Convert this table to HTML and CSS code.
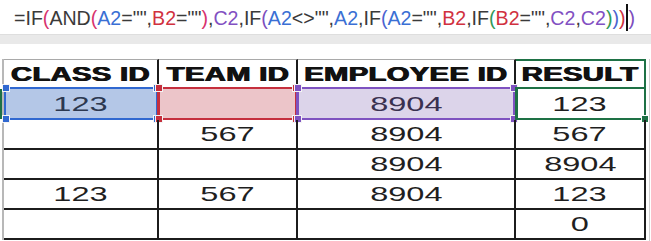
FILE: index.html
```html
<!DOCTYPE html>
<html>
<head>
<meta charset="utf-8">
<link rel="stylesheet" href="styles.css">
</head>
<body>
<div class="fbar">
  <span class="formula">=IF<span class="pk">(</span>AND<span class="pk">(</span><span class="ra">A2</span>="",<span class="rb">B2</span>=""<span class="pk">)</span>,<span class="rc">C2</span>,IF<span class="pp">(</span><span class="ra">A2</span>&lt;&gt;"",<span class="ra">A2</span>,IF<span class="pb">(</span><span class="ra">A2</span>="",<span class="rb">B2</span>,IF<span class="pg">(</span><span class="rb">B2</span>="",<span class="rc">C2</span>,<span class="rc">C2</span><span class="pg">)</span><span class="pb">)</span><span class="pr">)</span><span class="cursor"></span><span class="pp">)</span></span>
</div>
<div class="strip"></div>
<div class="gap"></div>
<div class="sheet">
  <div class="rowmark"></div>
  <div class="grid">
    <div class="cell head"><span class="hs">CLASS ID</span></div>
    <div class="cell head"><span class="hs">TEAM ID</span></div>
    <div class="cell head"><span class="hs">EMPLOYEE ID</span></div>
    <div class="cell head head-active"><span class="hs">RESULT</span></div>

    <div class="cell sel sel-a"><span class="num">123</span><div class="ref ref-a"><i class="h tl"></i><i class="h tr"></i><i class="h bl"></i><i class="h br"></i></div></div>
    <div class="cell sel sel-b"><div class="ref ref-b"><i class="h tl"></i><i class="h tr"></i><i class="h bl"></i><i class="h br"></i></div></div>
    <div class="cell sel sel-c"><span class="num">8904</span><div class="ref ref-c"><i class="h tl"></i><i class="h tr"></i><i class="h bl"></i><i class="h br"></i></div></div>
    <div class="cell sel"><span class="num">123</span><div class="active"><i class="fill"></i></div></div>

    <div class="cell"></div>
    <div class="cell"><span class="num">567</span></div>
    <div class="cell"><span class="num">8904</span></div>
    <div class="cell"><span class="num">567</span></div>

    <div class="cell"></div>
    <div class="cell"></div>
    <div class="cell"><span class="num">8904</span></div>
    <div class="cell"><span class="num">8904</span></div>

    <div class="cell"><span class="num">123</span></div>
    <div class="cell"><span class="num">567</span></div>
    <div class="cell"><span class="num">8904</span></div>
    <div class="cell"><span class="num">123</span></div>

    <div class="cell"></div>
    <div class="cell"></div>
    <div class="cell"></div>
    <div class="cell"><span class="num">0</span></div>
  </div>
  <div class="edge"></div>
</div>
</body>
</html>
```
FILE: styles.css
```css
html, body {
  margin: 0;
  padding: 0;
}
body {
  width: 651px;
  height: 241px;
  overflow: hidden;
  background: #ffffff;
  font-family: "Liberation Sans", Arial, sans-serif;
}

.fbar {
  height: 34px;
  box-sizing: border-box;
  padding-left: 14px;
  display: flex;
  align-items: center;
}
.formula {
  font-size: 19.6px;
  color: #3a3a3a;
  white-space: nowrap;
  line-height: 24px;
}
.ra { color: #3a6fd4; }
.rb { color: #d1313f; }
.rc { color: #8250c2; }
.pk { color: #d8326e; }
.pp { color: #7c4dbd; }
.pb { color: #4b63d0; }
.pg { color: #2f9a57; }
.pr { color: #d1313f; }
.cursor {
  display: inline-block;
  width: 2px;
  height: 27px;
  background: #111;
  vertical-align: -6px;
  margin: 0 1px 0 0;
}

.strip {
  height: 10px;
  background: #e9e9e9;
  border-top: 1px solid #dedede;
  box-sizing: border-box;
}
.gap { height: 15px; }

.sheet {
  display: flex;
  align-items: flex-start;
  position: relative;
}
.rowmark {
  width: 2px;
  height: 30px;
  margin-top: 30px;
  background: #1e7145;
}
.grid {
  display: grid;
  grid-template-columns: 155px 139px 218px 130px;
  grid-template-rows: 30px 31px 30px 30px 30px 30px;
  border-left: 2px solid #b8b8b8;
}
.edge {
  width: 1px;
  height: 182px;
  margin-left: 3px;
  background: #cfcfcf;
}

.cell {
  box-sizing: border-box;
  border-right: 2px solid #1c1c1c;
  border-bottom: 2px solid #1c1c1c;
  display: flex;
  align-items: center;
  justify-content: center;
  position: relative;
  color: #1f1f1f;
}
.head {
  border-top: 1px solid #a9a9a9;
}
.head-active {
  border-top: 2px solid #1e7145;
  border-right: 2px solid #1e7145;
}

.hs {
  display: inline-block;
  font-size: 19.5px;
  font-weight: 700;
  color: #111;
  transform: scaleX(1.5);
  text-shadow: 0.6px 0 0 #111, -0.4px 0 0 #111;
  letter-spacing: 0.2px;
  margin-top: 1px;
}
.num {
  display: inline-block;
  font-size: 21px;
  color: #1f1f1f;
  transform: scaleX(1.55);
}

.sel-a { background: #b4c7e7; }
.sel-a .num { color: #2c3850; }
.sel-b { background: #ecc5c9; }
.sel-c { background: #dcd4ea; }
.sel-c .num { color: #3a3150; }

.ref {
  position: absolute;
  left: -1px;
  right: -1px;
  top: -2px;
  bottom: -2px;
  border: 2px solid;
  box-sizing: border-box;
}
.ref-a { border-color: #3068d0; color: #3068d0; left: 0; }
.ref-b { border-color: #c52f3d; color: #c52f3d; border-left-width: 3px; left: -2px; }
.ref-c { border-color: #7e52c0; color: #7e52c0; border-left-width: 3px; left: -2px; }

.h {
  position: absolute;
  width: 6px;
  height: 6px;
  background: currentColor;
  border: 1px solid #f4f4f4;
  box-sizing: content-box;
}
.h.tl { left: -5px; top: -5px; }
.h.tr { right: -5px; top: -5px; }
.h.bl { left: -5px; bottom: -5px; }
.h.br { right: -5px; bottom: -5px; }
.ref-a .h.tl, .ref-a .h.bl { left: -4px; }

.active {
  position: absolute;
  left: -1px;
  right: -2px;
  top: -2px;
  bottom: -2px;
  border: 2px solid #1e7145;
  border-left-width: 3px;
}
.fill {
  position: absolute;
  right: -5px;
  bottom: -5px;
  width: 6px;
  height: 6px;
  background: #1e7145;
  border: 1px solid #ffffff;
}
```
